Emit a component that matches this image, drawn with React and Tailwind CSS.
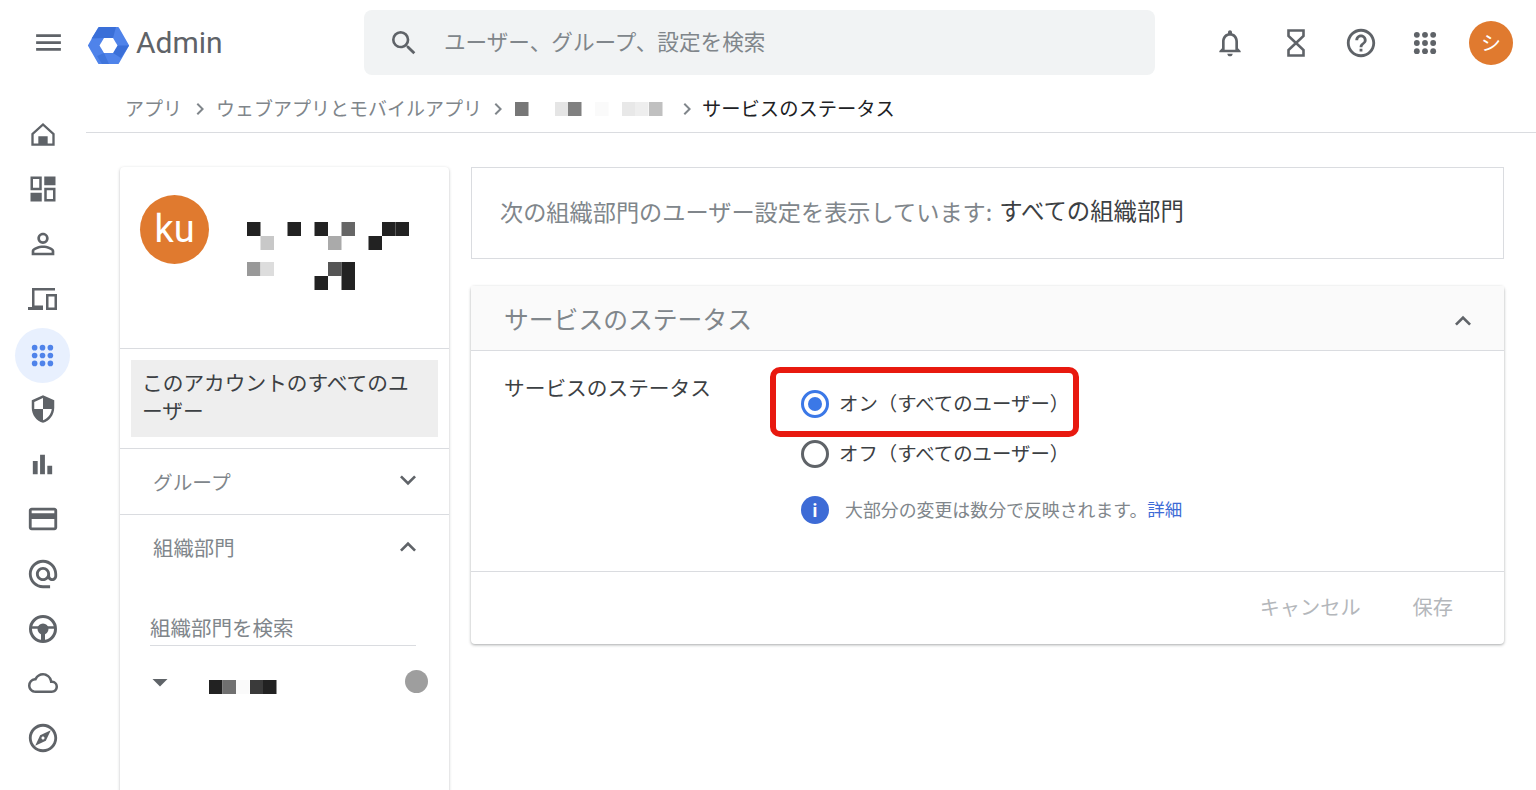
import {
  MdMenu, MdSearch, MdNotificationsNone, MdHelpOutline, MdPersonOutline, MdBarChart,
  MdOutlineCreditCard, MdAlternateEmail, MdOutlineCloud, MdOutlineExplore, MdExpandMore,
  MdExpandLess, MdArrowDropDown, MdChevronRight,
} from "react-icons/md"

const font = { fontFamily: '"Noto Sans CJK JP", sans-serif' }

function Dots({ color, size = 24 }) {
  const spots = [5, 12, 19]
  return (
    <svg width={size} height={size} viewBox="0 0 24 24" fill={color}>
      {spots.map((y) => spots.map((x) => <circle key={`${x}-${y}`} cx={x} cy={y} r="2.5" />))}
    </svg>
  )
}

function Logo() {
  return (
    <svg width="41" height="37" viewBox="0 0 41 37" className="mt-[6px]">
      <path d="M11 1H30L40 18.5L30 36H11L1 18.5Z" fill="#4f83ea" stroke="#4f83ea" strokeWidth="2" strokeLinejoin="round" />
      <path d="M11 0H28L25 11H16L3.500 11.500Z" fill="#3a6fd8" />
      <path d="M29.500 18.500H41L33 31L25 26Z" fill="#3a6fd8" />
      <path d="M16 26L21 37H14L9 29Z" fill="#3f75dc" />
      <path d="M16 11H25L29.500 18.500L25 26H16L11.500 18.500Z" fill="#fff" />
    </svg>
  )
}

function HomeIcon() {
  return (
    <svg width="28" height="28" viewBox="0 0 24 24" fill="#5f6368">
      <path d="M12 2.500L2 11.500V22H22V11.500ZM4 20.200V12.400L12 5.200L20 12.400V20.200H16V14H8V20.200Z" />
    </svg>
  )
}

function DashIcon() {
  return (
    <svg width="30" height="30" viewBox="0 0 24 24" fill="#5f6368">
      <path d="M2 2H11V13H2ZM4 4V11H9V4Z" fillRule="evenodd" />
      <path d="M13 2H22V9H13Z" />
      <path d="M2 15H11V22H2Z" />
      <path d="M13 11H22V22H13ZM15 13V20H20V13Z" fillRule="evenodd" />
    </svg>
  )
}

function DevicesIcon() {
  return (
    <svg width="30" height="26" viewBox="0 0 30 26" fill="#5f6368">
      <path d="M4 2H27V4.500H6.500V19.500H15V24H0V21H4Z" />
      <path d="M18 8H29V24H18ZM20.500 10.500V21.500H26.500V10.500Z" fillRule="evenodd" />
    </svg>
  )
}

function ShieldIcon() {
  return (
    <svg width="30" height="30" viewBox="0 0 24 24" fill="#5f6368">
      <path d="M12 1L3 5v6c0 5.550 3.840 10.740 9 12 5.160-1.260 9-6.450 9-12V5l-9-4zm0 10.990h7c-.530 4.120-3.280 7.790-7 8.940V12H5V6.300l7-3.110v8.800z" />
    </svg>
  )
}

function WheelIcon() {
  return (
    <svg width="28" height="28" viewBox="0 0 28 28" fill="none" stroke="#5f6368">
      <circle cx="14" cy="14" r="12.500" strokeWidth="3" />
      <path d="M2 12.500H26" strokeWidth="2.500" />
      <path d="M14 14V26" strokeWidth="4" />
      <circle cx="14" cy="14" r="5.500" fill="#5f6368" stroke="none" />
    </svg>
  )
}

function HourglassIcon() {
  return (
    <svg width="18" height="28" viewBox="0 0 18 28" fill="none" stroke="#5f6368" strokeWidth="2.600">
      <path d="M1.500 1.500H16.500V7L9 14L16.500 21V26.500H1.500V21L9 14L1.500 7Z" />
    </svg>
  )
}

// redacted text in the screenshot: blocks of gray at pixel positions
function Mosaic({ w, h, cells, size = 13.5 }) {
  return (
    <svg width={w} height={h} className="block">
      {cells.map(([x, y, color], i) => <rect key={i} x={x} y={y} width={size} height={size + 0.5} fill={color} />)}
    </svg>
  )
}

const sideItems = [
  { icon: <HomeIcon /> },
  { icon: <DashIcon /> },
  { icon: <MdPersonOutline size={34} color="#5f6368" /> },
  { icon: <DevicesIcon /> },
  { icon: <Dots color="#4f83ea" size={27} />, active: true },
  { icon: <ShieldIcon /> },
  { icon: <MdBarChart size={29} color="#5f6368" /> },
  { icon: <MdOutlineCreditCard size={34} color="#5f6368" /> },
  { icon: <MdAlternateEmail size={34} color="#5f6368" /> },
  { icon: <WheelIcon /> },
  { icon: <MdOutlineCloud size={30} color="#5f6368" /> },
  { icon: <MdOutlineExplore size={34} color="#5f6368" /> },
]

const nameCells = [
  [0, 0, "#222"], [40.500, 0, "#222"], [67.500, 0, "#222"], [94.500, 0, "#666"], [135, 0, "#222"], [148.500, 0, "#222"],
  [13.500, 14, "#c8c8c8"], [81, 14, "#aaa"], [121.500, 14, "#222"],
  [0, 40, "#999"], [13.500, 40, "#ddd"], [81, 40, "#555"], [94.500, 40, "#222"],
  [67.500, 54, "#222"], [94.500, 54, "#222"],
]

const crumbCells = [
  [0, 0, "#777"], [40, 0, "#e5e5e5"], [53, 0, "#808080"], [80, 0, "#fafafa"],
  [107, 0, "#e8e8e8"], [120, 0, "#eee"], [134, 0, "#c0c0c0"],
]

const orgCells = [
  [0, 0, "#222"], [13.500, 0, "#707070"], [27, 0, "#fafafa"], [41, 0, "#3a3a3a"], [54, 0, "#222"],
]

export default function App() {
  return (
    <div className="h-[790px] overflow-hidden bg-white" style={font}>
      {/* Header */}
      <div className="flex h-[85px] items-center">
        <div className="flex w-[364px] items-center pl-[32px]">
          <MdMenu size={33} color="#5f6368" className="mr-[23px]" />
          <Logo />
          <span className="ml-[7px] text-[30px] leading-none text-[#5f6368]" style={{ fontFamily: "Roboto, sans-serif" }}>Admin</span>
        </div>
        <div className="flex h-[65px] w-[791px] items-center rounded-lg bg-[#f1f3f4] pl-[24px]">
          <MdSearch size={32} color="#5f6368" />
          <span className="mb-[2px] ml-[24px] text-[21.600px] text-[#80868b]">ユーザー、グループ、設定を検索</span>
        </div>
        <div className="ml-[59px] flex items-center">
          <MdNotificationsNone size={32} color="#5f6368" />
          <div className="ml-[41px]"><HourglassIcon /></div>
          <MdHelpOutline size={34} color="#5f6368" className="ml-[39px]" />
          <div className="ml-[33px]"><Dots color="#5f6368" size={28} /></div>
          <div className="ml-[30px] flex h-[44px] w-[44px] items-center justify-center rounded-full bg-[#e07a2f] text-[20px] text-white">シ</div>
        </div>
      </div>

      <div className="flex">
        {/* Left rail */}
        <div className="flex w-[85px] shrink-0 flex-col items-center pt-[22px]">
          {sideItems.map((item, i) => (
            <div key={i} className={`flex h-[54.800px] w-[55px] items-center justify-center rounded-full ${item.active ? "-mb-[1px] mt-[2px] bg-[#e8f0fe]" : ""}`}>
              {item.icon}
            </div>
          ))}
        </div>

        <div className="min-w-0 flex-1">
          {/* Breadcrumb */}
          <div className="ml-[1px] flex h-[48px] items-center border-b border-[#dadce0] pl-[39px] text-[19px] text-[#80868b]">
            <span>アプリ</span>
            <MdChevronRight size={24} color="#80868b" className="ml-[6px] mr-[4px]" />
            <span>ウェブアプリとモバイルアプリ</span>
            <MdChevronRight size={24} color="#80868b" className="ml-[4px] mr-[5px]" />
            <Mosaic w={148} h={14} cells={crumbCells} />
            <MdChevronRight size={24} color="#80868b" className="ml-[12px] mr-[3px]" />
            <span className="text-[19.300px] text-[#202124]">サービスのステータス</span>
          </div>

          <div className="flex gap-[22px] pl-[35px] pr-[32px] pt-[34px]">
            {/* Left card */}
            <div className="h-[640px] w-[329px] shrink-0 rounded-sm bg-white shadow-[0_1px_3px_rgba(60,64,67,0.35)]">
              <div className="flex h-[182px] border-b border-[#dadce0] pl-[20px] pt-[28px]">
                <div className="flex h-[69px] w-[69px] items-center justify-center rounded-full bg-[#e07a2f] text-[38px] text-white" style={{ fontFamily: "Roboto, sans-serif" }}>ku</div>
                <div className="ml-[38px] mt-[27px]"><Mosaic w={162} h={69} cells={nameCells} /></div>
              </div>
              <div className="border-b border-[#dadce0] px-[11px] py-[11px]">
                <div className="h-[77px] bg-[#eeeeee] pl-[11px] pr-[20px] pt-[8px] text-[20.700px] leading-[28px] text-[#3c4043] [line-break:anywhere]">このアカウントのすべてのユーザー</div>
              </div>
              <div className="flex h-[66px] items-center justify-between border-b border-[#dadce0] pl-[33px] pr-[25px] text-[19.700px] text-[#80868b]">
                <span>グループ</span>
                <MdExpandMore size={32} color="#5f6368" className="-mt-[4px]" />
              </div>
              <div className="flex h-[65px] items-center justify-between pl-[33px] pr-[25px] text-[20.400px] text-[#80868b]">
                <span>組織部門</span>
                <MdExpandLess size={32} color="#5f6368" className="-mt-[2px]" />
              </div>
              <div className="ml-[30px] mr-[33px] mt-[18px] h-[48px] border-b border-[#dadce0] pt-[14px] text-[20.500px] leading-[30px] text-[#80868b]">組織部門を検索</div>
              <div className="mt-[18px] flex items-start pl-[22px] pr-[21px]">
                <MdArrowDropDown size={36} color="#5f6368" />
                <div className="ml-[31px] mt-[16px] flex-1"><Mosaic w={68} h={14} cells={orgCells} /></div>
                <div className="mt-[6px] h-[23px] w-[23px] rounded-full bg-[#9e9e9e]"></div>
              </div>
            </div>

            {/* Right column */}
            <div className="min-w-0 flex-1">
              <div className="flex h-[92px] items-center border border-[#dadce0] pb-[4px] pl-[28px] text-[23.200px] text-[#80868b]">
                次の組織部門のユーザー設定を表示しています:<span className="ml-[7px] text-[23.400px] text-[#3c4043]">すべての組織部門</span>
              </div>

              <div className="mt-[27px] h-[358px] rounded-sm bg-white shadow-[0_1px_3px_rgba(60,64,67,0.45)]">
                <div className="flex h-[65px] items-center justify-between border-b border-[#dadce0] bg-[#fafafa] pl-[33px] pr-[25px] text-[24.800px] text-[#80868b]">
                  <span className="mt-[2px]">サービスのステータス</span>
                  <MdExpandLess size={32} color="#5f6368" className="mt-[6px]" />
                </div>
                <div className="flex h-[221px] border-b border-[#dadce0] pl-[33px] pt-[20px]">
                  <div className="w-[297px] text-[20.700px] leading-[32px] text-[#3c4043]">サービスのステータス</div>
                  <div className="pt-[8px]">
                    <div className="relative flex h-[50px] items-center text-[19.400px] text-[#3c4043]">
                      <div className="flex h-[28px] w-[28px] items-center justify-center rounded-full border-[3px] border-[#3b78e7]">
                        <div className="h-[14px] w-[14px] rounded-full bg-[#3b78e7]"></div>
                      </div>
                      <span className="mb-[2px] ml-[10px]">オン（すべてのユーザー）</span>
                      <div className="absolute -left-[31px] -top-[12px] h-[70px] w-[309px] rounded-[10px] border-[6px] border-[#e8190f]"></div>
                    </div>
                    <div className="flex h-[50px] items-center text-[19.400px] text-[#3c4043]">
                      <div className="h-[28px] w-[28px] rounded-full border-[3px] border-[#5f6368]"></div>
                      <span className="mb-[2px] ml-[10px]">オフ（すべてのユーザー）</span>
                    </div>
                    <div className="mt-[17px] flex items-center text-[17.900px] text-[#80868b]">
                      <div className="flex h-[28px] w-[28px] items-center justify-center rounded-full bg-[#3d6bd6] text-[18px] font-bold text-white" style={{ fontFamily: "Roboto, sans-serif" }}>i</div>
                      <span className="mb-[2px] ml-[16px]">大部分の変更は数分で反映されます。</span>
                      <span className="mb-[2px] text-[17.500px] text-[#3d6bd6]">詳細</span>
                    </div>
                  </div>
                </div>
                <div className="flex h-[71px] items-center justify-end gap-[52px] pr-[51px] text-[20.200px] text-[#b4b7bb]">
                  <span>キャンセル</span>
                  <span>保存</span>
                </div>
              </div>
            </div>
          </div>
        </div>
      </div>
    </div>
  )
}
